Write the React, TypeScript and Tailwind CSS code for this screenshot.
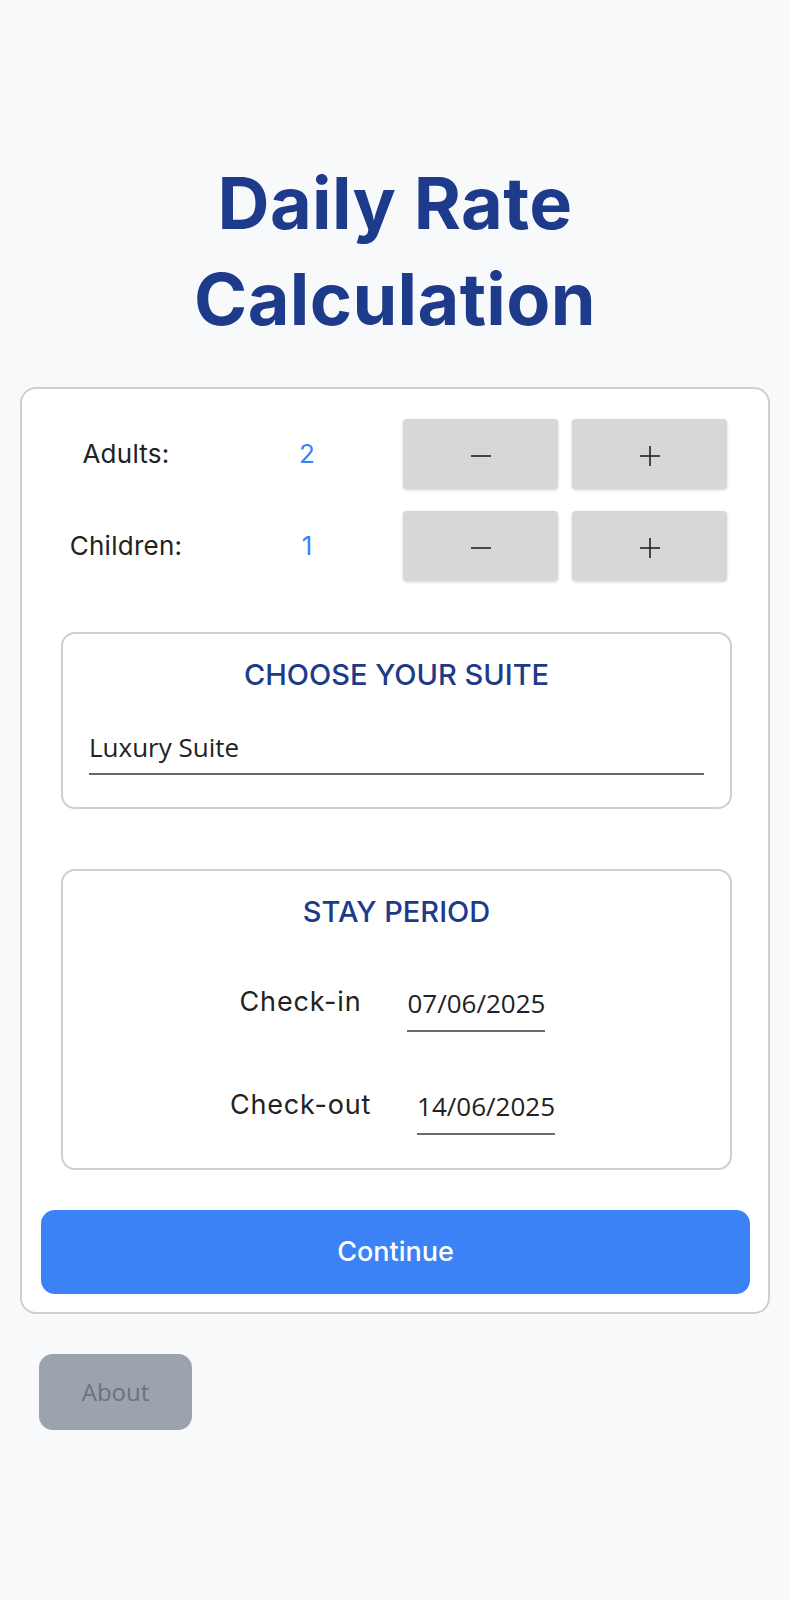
const sans = "font-['Inter','Liberation_Sans',sans-serif]";
const open = "font-['Open_Sans','Liberation_Sans',sans-serif]";

function MinusIcon() {
  return (
    <svg width="22" height="22" viewBox="0 0 22 22" className="mt-[3px]">
      <line x1="1" y1="11" x2="21" y2="11" stroke="#222" strokeWidth="1.6" />
    </svg>
  );
}

function PlusIcon() {
  return (
    <svg width="22" height="22" viewBox="0 0 22 22" className="mt-[3px]">
      <line x1="1" y1="11" x2="21" y2="11" stroke="#222" strokeWidth="1.6" />
      <line x1="11" y1="1" x2="11" y2="21" stroke="#222" strokeWidth="1.6" />
    </svg>
  );
}

function StepButton({ plus }: { plus?: boolean }) {
  return (
    <button className="w-[155px] h-[70px] rounded-[4px] bg-[#d7d7d7] shadow-[0_1px_3px_rgba(0,0,0,0.18)] flex items-center justify-center">
      {plus ? <PlusIcon /> : <MinusIcon />}
    </button>
  );
}

function CounterRow({ label, value }: { label: string; value: number }) {
  return (
    <div className="flex items-center h-[70px]">
      <div className={`w-[170px] text-center text-[26px] leading-[36px] text-[#222] tracking-[0.01em] ${sans}`}>{label}</div>
      <div className={`w-[192px] text-center text-[26px] leading-[36px] text-[#3b82f6] ${sans}`}>{value}</div>
      <div className="flex gap-[14px]">
        <StepButton />
        <StepButton plus />
      </div>
    </div>
  );
}

function DateRow({ label, value, className = "" }: { label: string; value: string; className?: string }) {
  return (
    <div className={`flex justify-center items-start gap-[46px] pr-[8px] ${className}`}>
      <span className={`text-[27px] leading-[36px] text-[#222] tracking-[0.03em] ${sans}`}>{label}</span>
      <span className={`pt-[1px] pb-[9px] border-b-2 border-[#6b6b6b] text-[26px] leading-[36px] text-[#222] ${open}`}>
        {value}
      </span>
    </div>
  );
}

export default function App() {
  return (
    <div className="min-h-[1600px] bg-[#f8f9fb] flex flex-col">
      <h1
        className={`mt-[155px] text-center text-[72px] leading-[96px] font-bold text-[#1e3a8a] tracking-[0.005em] ${sans}`}
      >
        Daily Rate
        <br />
        Calculation
      </h1>

      <div className="mx-[20px] mt-[40px] border-2 border-[#cfcfcf] rounded-[16px] bg-white pt-[30px] pb-[18px] pl-[19px] pr-[18px]">
        <div className="flex flex-col gap-[22px]">
          <CounterRow label="Adults:" value={2} />
          <CounterRow label="Children:" value={1} />
        </div>

        {/* Suite */}
        <div className="ml-[20px] mr-[18px] mt-[51px] border-2 border-[#cfcfcf] rounded-[14px] pt-[24px] pb-[32px] px-[26px]">
          <h2 className={`text-center text-[29px] leading-[34px] font-medium text-[#1e3a8a] ${sans}`}>
            CHOOSE YOUR SUITE
          </h2>
          <div className={`mt-[37px] pb-[8px] border-b-2 border-[#666] text-[26px] leading-[36px] text-[#222] ${open}`}>
            Luxury Suite
          </div>
        </div>

        {/* Stay period */}
        <div className="ml-[20px] mr-[18px] mt-[60px] border-2 border-[#cfcfcf] rounded-[14px] pt-[24px] pb-[33px]">
          <h2 className={`text-center text-[29px] leading-[34px] font-medium text-[#1e3a8a] ${sans}`}>
            STAY PERIOD
          </h2>
          <DateRow label="Check-in" value="07/06/2025" className="mt-[55px]" />
          <DateRow label="Check-out" value="14/06/2025" className="mt-[55px]" />
        </div>

        <button
          className={`mt-[40px] w-full h-[84px] rounded-[14px] bg-[#3b82f6] text-white text-[27px] font-medium flex items-center justify-center ${sans}`}
        >
          Continue
        </button>
      </div>

      <div className="mt-[40px] ml-[39px]">
        <button
          className={`w-[153px] h-[76px] rounded-[14px] bg-[#9ca3af] text-[#6b7280] text-[24px] flex items-center justify-center ${open}`}
        >
          About
        </button>
      </div>
    </div>
  );
}
